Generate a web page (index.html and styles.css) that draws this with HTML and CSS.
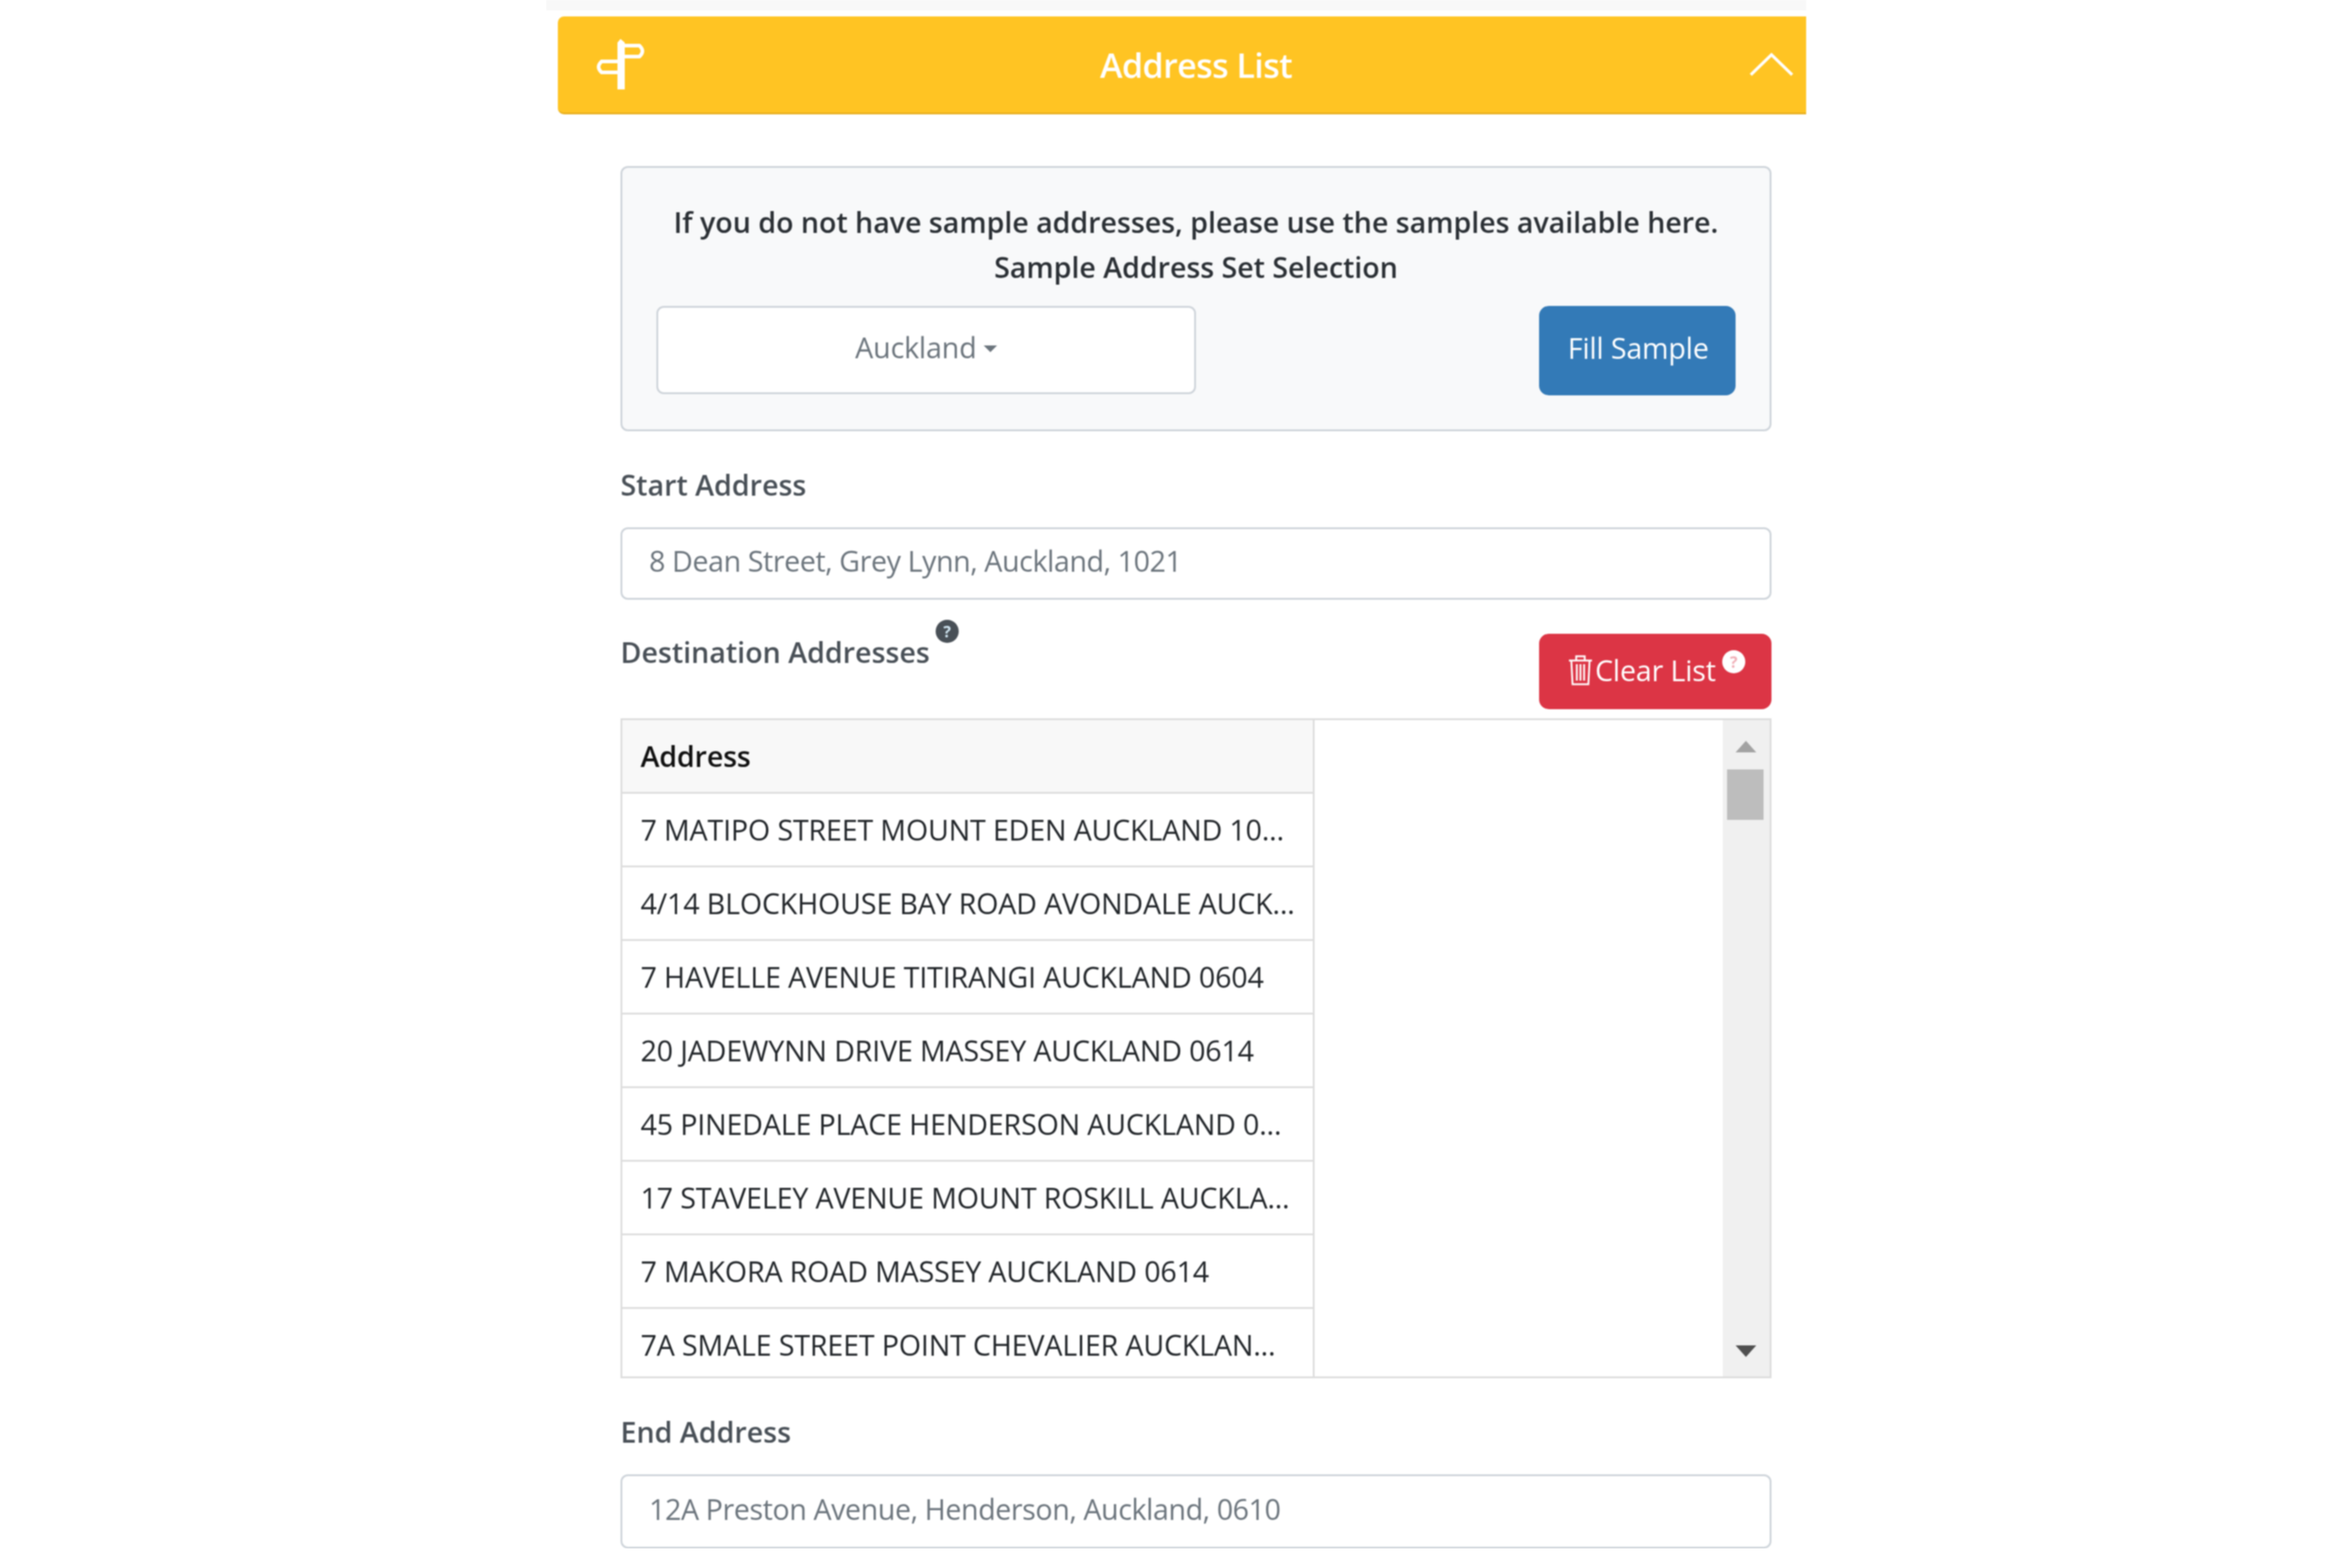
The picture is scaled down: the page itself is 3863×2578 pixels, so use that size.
FILE: index.html
```html
<!DOCTYPE html>
<html lang="en">
<head>
<meta charset="utf-8">
<title>Address List</title>
<link rel="stylesheet" href="styles.css">
</head>
<body>
<main class="app">
  <div class="topband"></div>
  <header class="bar">
    <svg class="bar-icon" viewBox="0 0 86 84" aria-hidden="true">
      <path d="M50 11 H74 Q84 20 74 29 H50 M38 37 H12 Q2 46 12 55 H38" fill="none" stroke="#fff" stroke-width="6"/>
      <path d="M38 6 L43 0 L50 6 V83 H38 Z" fill="#fff"/>
    </svg>
    <h1 class="bar-title">Address List</h1>
    <svg class="bar-chevron" viewBox="0 0 72 38" aria-hidden="true"><path d="M2 36 L36 3 L70 36" fill="none" stroke="#fff" stroke-width="5"/></svg>
  </header>
  <section class="content">
    <div class="sample-card">
      <p class="sample-text">If you do not have sample addresses, please use the samples available here.<br>Sample Address Set Selection</p>
      <div class="sample-row">
        <div class="select">Auckland<span class="caret"></span></div>
        <div class="btn btn-blue">Fill Sample</div>
      </div>
    </div>
    <div class="label label-start">Start Address</div>
    <div class="input">8 Dean Street, Grey Lynn, Auckland, 1021</div>
    <div class="dest-row">
      <div class="label dest-label">Destination Addresses<span class="help help-dark">?</span></div>
      <div class="btn btn-red">
        <svg class="trash" viewBox="0 0 40 50" aria-hidden="true"><path d="M1 9 H39 M13 9 V2 H27 V9 M5 9 L7 48 H33 L35 9 M14 15 V42 M20 15 V42 M26 15 V42" fill="none" stroke="#fff" stroke-width="3"/></svg>Clear List<span class="help help-light">?</span>
      </div>
    </div>
    <div class="grid">
      <table class="table">
        <thead><tr><th>Address</th></tr></thead>
        <tbody>
          <tr><td>7 MATIPO STREET MOUNT EDEN AUCKLAND 10...</td></tr>
          <tr><td>4/14 BLOCKHOUSE BAY ROAD AVONDALE AUCK...</td></tr>
          <tr><td>7 HAVELLE AVENUE TITIRANGI AUCKLAND 0604</td></tr>
          <tr><td>20 JADEWYNN DRIVE MASSEY AUCKLAND 0614</td></tr>
          <tr><td>45 PINEDALE PLACE HENDERSON AUCKLAND 0...</td></tr>
          <tr><td>17 STAVELEY AVENUE MOUNT ROSKILL AUCKLA...</td></tr>
          <tr><td>7 MAKORA ROAD MASSEY AUCKLAND 0614</td></tr>
          <tr><td>7A SMALE STREET POINT CHEVALIER AUCKLAN...</td></tr>
        </tbody>
      </table>
      <div class="scrollbar">
        <span class="arrow arrow-up"></span>
        <span class="thumb"></span>
        <span class="arrow arrow-down"></span>
      </div>
    </div>
    <div class="label label-end">End Address</div>
    <div class="input input-end">12A Preston Avenue, Henderson, Auckland, 0610</div>
  </section>
</main>
</body>
</html>
```
FILE: styles.css
```css
* { box-sizing: border-box; }
html, body { margin: 0; padding: 0; background: #fff; }
body { font-family: "Open Sans", "Liberation Sans", sans-serif; font-size: 47px; letter-spacing: -0.25px; color: #212529; }
.app { width: 2052px; margin-left: 917px; filter: blur(1px); }
.topband { height: 17px; background: #f8f8f8; margin: 0 0 10px -19px; }
.bar { height: 161px; background: #ffc423; border-radius: 10px 0 0 10px; border-bottom: 3px solid #e8b020; display: grid; grid-template-columns: 1fr auto 1fr; align-items: center; padding-left: 46px; color: #fff; }
.bar-icon { width: 86px; height: 84px; margin-left: 14px; margin-top: -1px; }
.bar-title { margin: 0; font-size: 56px; font-weight: 600; letter-spacing: -1px; }
.bar-chevron { width: 72px; height: 38px; justify-self: end; margin-right: 21px; }
.content { padding: 85px 57px 0 103px; }
.sample-card { height: 436px; background: #f8f9fa; border: 3px solid #ced4da; border-radius: 12px; padding: 52px 56px 0; }
.sample-text { margin: 0 0 27px; text-align: center; font-weight: 600; line-height: 74px; letter-spacing: -0.05px; color: #2b3035; }
.sample-row { display: flex; justify-content: space-between; }
.select { width: 887px; height: 145px; background: #fff; border: 3px solid #ced4da; border-radius: 12px; display: flex; align-items: center; justify-content: center; padding-bottom: 9px; color: #6c757d; }
.caret { margin-left: 12px; margin-top: 4px; border: 11px solid transparent; border-top-color: #6c757d; border-bottom: 0; }
.btn { display: flex; align-items: center; justify-content: center; color: #fff; border-radius: 16px; }
.btn-blue { width: 323px; height: 147px; background: #337ab7; padding: 0 0 9px 3px; }
.btn-red { width: 382px; height: 124px; background: #dc3545; }
.label { font-weight: 600; color: #495057; letter-spacing: 0; }
.label-start { margin-top: 62px; height: 52px; line-height: 52px; }
.input { margin-top: 44px; height: 119px; border: 3px solid #ced4da; border-radius: 12px; background: #fff; display: flex; align-items: center; padding: 0 0 9px 44px; letter-spacing: -0.65px; color: #6c757d; }
.input-end { margin-top: 44px; height: 122px; }
.dest-row { margin-top: 56px; display: flex; justify-content: space-between; }
.dest-label { position: relative; margin-top: 4px; line-height: 52px; }
.help { display: inline-block; width: 38px; height: 38px; border-radius: 50%; text-align: center; font-size: 26px; line-height: 38px; font-weight: 700; letter-spacing: 0; position: absolute; }
.help-dark { background: #495057; color: #cfe4f0; left: 518px; top: -27px; }
.btn-red { position: relative; justify-content: flex-start; padding: 0 18px 4px 48px; }
.trash { width: 40px; height: 50px; margin-right: 4px; }
.help-light { background: #fff; color: #f0b0b8; right: 43px; top: 27px; }
.grid { margin-top: 15px; height: 1085px; border: 3px solid #ddd; display: flex; overflow: hidden; }
.table { width: 1138px; border-collapse: collapse; table-layout: fixed; margin-right: auto; align-self: flex-start; }
.table th, .table td { border-right: 3px solid #ddd; border-bottom: 3px solid #ddd; padding: 0 0 0 30px; height: 121px; text-align: left; white-space: nowrap; overflow: hidden; color: #212529; }
.table th { height: 119px; background: #f8f8f8; font-weight: 600; color: #111; }
.scrollbar { width: 77px; background: #f0f0f0; position: relative; }
.thumb { position: absolute; top: 81px; left: 7px; width: 60px; height: 83px; background: #bdbdbd; }
.arrow { position: absolute; left: 21px; width: 0; height: 0; border-left: 17px solid transparent; border-right: 17px solid transparent; }
.arrow-up { top: 34px; border-bottom: 19px solid #a3a3a3; }
.arrow-down { bottom: 32px; border-top: 19px solid #505050; }
.label-end { margin-top: 62px; height: 52px; line-height: 52px; }
```
